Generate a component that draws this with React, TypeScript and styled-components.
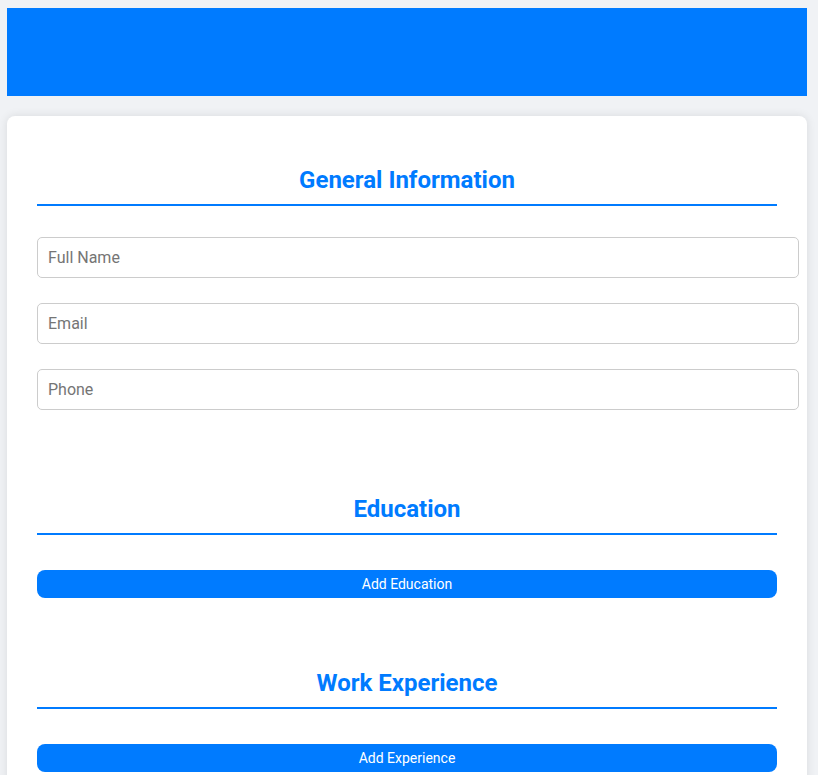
import React from "react";
import styled, { createGlobalStyle } from "styled-components";

const GlobalStyle = createGlobalStyle`
  html, body {
    margin: 0;
    padding: 0;
    background: #f0f2f5;
    font-family: Roboto, "Liberation Sans", Arial, sans-serif;
  }
  body {
    padding: 8px 11px 20px 7px;
  }
`;

const Page = styled.div`
  width: 800px;
  display: flex;
  flex-direction: column;
  gap: 20px;
`;

const Header = styled.header`
  height: 88px;
  background: #007bff;
`;

const Card = styled.main`
  background: #ffffff;
  border-radius: 8px;
  box-shadow: 0 0 10px rgba(0, 0, 0, 0.1);
  padding: 30px;
  display: flex;
  flex-direction: column;
`;

const Section = styled.section<{ $spaceAfter: number }>`
  display: flex;
  flex-direction: column;
  margin-bottom: ${(p) => p.$spaceAfter}px;
`;

const Heading = styled.h2`
  margin: 20px 0 0;
  padding-bottom: 10px;
  border-bottom: 2px solid #007bff;
  color: #007bff;
  font-size: 24px;
  font-weight: 700;
  line-height: 28px;
  text-align: center;
`;

const Fields = styled.div<{ $top: number }>`
  display: flex;
  flex-direction: column;
  gap: 25px;
  margin-top: ${(p) => p.$top}px;
`;

const Input = styled.input`
  display: block;
  width: 100%;
  box-sizing: content-box;
  padding: 10px;
  border: 1px solid #ccc;
  border-radius: 5px;
  font-family: Roboto, "Liberation Sans", Arial, sans-serif;
  font-size: 16px;
  line-height: 19px;
  height: 19px;
  color: #333;
  background: #fff;
  outline: none;
  &::placeholder {
    color: #757575;
  }
`;

const Button = styled.button`
  display: block;
  width: 100%;
  height: 28px;
  padding: 0;
  border: none;
  border-radius: 8px;
  background: #007bff;
  color: #ffffff;
  font-family: Roboto, "Liberation Sans", Arial, sans-serif;
  font-size: 14px;
  cursor: pointer;
`;

export default function App() {
  return (
    <>
      <GlobalStyle />
      <Page>
        <Header />
        <Card>
          <Section $spaceAfter={65}>
            <Heading>General Information</Heading>
            <Fields $top={31}>
              <Input placeholder="Full Name" />
              <Input placeholder="Email" />
              <Input placeholder="Phone" />
            </Fields>
          </Section>
          <Section $spaceAfter={51}>
            <Heading>Education</Heading>
            <Fields $top={35}>
              <Button>Add Education</Button>
            </Fields>
          </Section>
          <Section $spaceAfter={30}>
            <Heading>Work Experience</Heading>
            <Fields $top={35}>
              <Button>Add Experience</Button>
            </Fields>
          </Section>
        </Card>
      </Page>
    </>
  );
}
